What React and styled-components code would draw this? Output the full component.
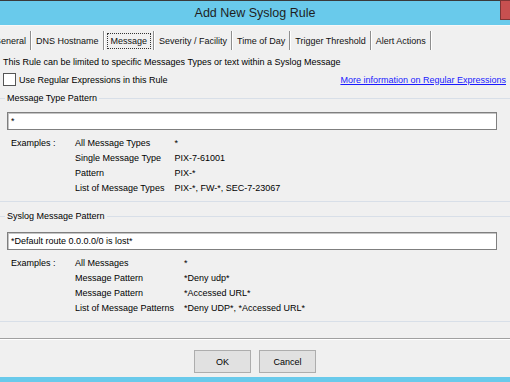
import styled, { createGlobalStyle } from "styled-components";

const GlobalStyle = createGlobalStyle`
  html, body {
    margin: 0;
    padding: 0;
    background: #f0f0f0;
  }
  body {
    width: 510px;
    height: 382px;
    overflow: hidden;
    font-family: "Liberation Sans", Arial, sans-serif;
    font-size: 9px;
    color: #000000;
  }
`;

const tabs = [
  "General",
  "DNS Hostname",
  "Message",
  "Severity / Facility",
  "Time of Day",
  "Trigger Threshold",
  "Alert Actions",
];

const typeExamples = [
  ["All Message Types", "*"],
  ["Single Message Type", "PIX-7-61001"],
  ["Pattern", "PIX-*"],
  ["List of Message Types", "PIX-*, FW-*, SEC-7-23067"],
];

const messageExamples = [
  ["All Messages", "*"],
  ["Message Pattern", "*Deny udp*"],
  ["Message Pattern", "*Accessed URL*"],
  ["List of Message Patterns", "*Deny UDP*, *Accessed URL*"],
];

function Examples({ rows }) {
  return (
    <ExampleGrid>
      {rows.map(([label, value], i) => (
        <ExampleRow key={i}>
          <span>{i === 0 ? "Examples :" : ""}</span>
          <span>{label}</span>
          <span>{value}</span>
        </ExampleRow>
      ))}
    </ExampleGrid>
  );
}

function GroupBox({ title, value, rows, top, inputTop }) {
  return (
    <Group $top={top}>
      <GroupHeader>
        <LineStub />
        <GroupTitle>{title}</GroupTitle>
        <LineFill />
      </GroupHeader>
      <TextInput $top={inputTop}>{value}</TextInput>
      <Examples rows={rows} />
    </Group>
  );
}

export default function App() {
  return (
    <>
      <GlobalStyle />
      <Window>
        <TitleBar>
          Add New Syslog Rule
          <CloseButton />
        </TitleBar>

        <TabStrip>
          {tabs.map((t) => (
            <Tab key={t} $active={t === "Message"}>
              <span>{t}</span>
            </Tab>
          ))}
        </TabStrip>

        <Intro>
          This Rule can be limited to specific Messages Types or text within a
          Syslog Message
        </Intro>

        <CheckRow>
          <CheckLabel>
            <CheckBox />
            Use Regular Expressions in this Rule
          </CheckLabel>
          <Link>More information on Regular Expressions</Link>
        </CheckRow>

        <GroupBox
          title="Message Type Pattern"
          value="*"
          rows={typeExamples}
          top={6}
          inputTop={8}
        />
        <GroupBox
          title="Syslog Message Pattern"
          value="*Default route 0.0.0.0/0 is lost*"
          rows={messageExamples}
          top={8}
          inputTop={10}
        />

        <Footer>
          <Button>OK</Button>
          <Button>Cancel</Button>
        </Footer>
        <BottomBar />
      </Window>
    </>
  );
}

const Window = styled.div`
  width: 510px;
  height: 382px;
  display: flex;
  flex-direction: column;
  overflow: hidden;
`;

const TitleBar = styled.div`
  height: 25px;
  box-sizing: border-box;
  border-top: 1px solid #3a3a3a;
  background: #69caeb;
  display: flex;
  align-items: center;
  justify-content: center;
  position: relative;
  font-size: 12.5px;
  color: #1e1e1e;
  box-shadow: 0 1px 0 #f7f7f7;
`;

const CloseButton = styled.div`
  position: absolute;
  right: -4px;
  top: -1px;
  width: 12px;
  height: 18px;
  background: #c75050;
  border: 1px solid #7d3535;
`;

const TabStrip = styled.div`
  display: flex;
  margin-top: 6px;
  margin-left: -10px;
  height: 19px;
`;

const Tab = styled.div`
  display: flex;
  align-items: center;
  padding: 0 2px;
  border-right: 1px solid #8e8e8e;
  box-shadow: 1px 0 0 #ffffff;
  margin-right: 1px;
  line-height: 19px;
  color: #111;

  span {
    padding: 0 ${(p) => (p.$active ? 3 : 1)}px;
    line-height: 14px;
    border: 1px dotted ${(p) => (p.$active ? "#333" : "transparent")};
  }
`;

const Intro = styled.div`
  margin-top: 6px;
  padding-left: 3px;
  line-height: 13px;
  white-space: nowrap;
`;

const CheckRow = styled.div`
  margin-top: 4px;
  height: 13px;
  display: flex;
  justify-content: space-between;
  align-items: center;
  padding: 0 4px 0 3px;
`;

const CheckLabel = styled.label`
  display: flex;
  align-items: center;
  gap: 3px;
`;

const CheckBox = styled.span`
  width: 11px;
  height: 11px;
  background: #ffffff;
  border: 1px solid #555555;
`;

const Link = styled.span`
  color: #1a1aff;
  text-decoration: underline;
`;

const Group = styled.div`
  margin-top: ${(p) => p.$top}px;
  padding-bottom: 5px;
  border-bottom: 1px solid #d8dfe8;
`;

const GroupHeader = styled.div`
  display: flex;
  align-items: center;
  height: 12px;
`;

const LineStub = styled.div`
  width: 5px;
  height: 1px;
  background: #d8dfe8;
`;

const LineFill = styled.div`
  flex: 1;
  height: 1px;
  background: #d8dfe8;
  margin-left: 2px;
`;

const GroupTitle = styled.span`
  padding-left: 2px;
  white-space: nowrap;
`;

const TextInput = styled.div`
  margin: ${(p) => p.$top}px 13px 0 7px;
  height: 18px;
  box-sizing: border-box;
  background: #ffffff;
  border: 1px solid #7f7f7f;
  box-shadow: inset 1px 1px 0 #c4c4c4;
  padding-left: 3px;
  display: flex;
  align-items: center;
`;

const ExampleGrid = styled.div`
  margin-top: 6px;
  padding-left: 11px;
  display: grid;
  grid-template-columns: 54px auto 1fr;
  column-gap: 10px;
`;

const ExampleRow = styled.div`
  display: contents;

  span {
    line-height: 15px;
    white-space: nowrap;
  }
`;

const Footer = styled.div`
  margin-top: 16px;
  border-top: 1px solid #a0a0a0;
  box-shadow: inset 0 1px 0 #ffffff;
  padding-top: 11px;
  display: flex;
  justify-content: center;
  gap: 8px;
`;

const Button = styled.button`
  width: 57px;
  height: 23px;
  background: #e1e1e1;
  border: 1px solid #adadad;
  font-family: "Liberation Sans", Arial, sans-serif;
  font-size: 9px;
  color: #000;
  padding: 0;
`;

const BottomBar = styled.div`
  margin-top: 4px;
  flex: 1;
  background: #69caeb;
`;
